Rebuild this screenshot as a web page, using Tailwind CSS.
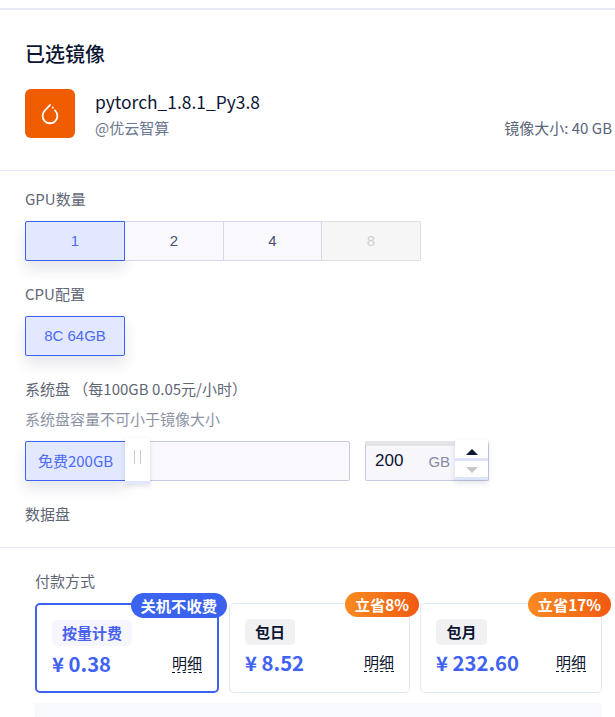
<!DOCTYPE html>
<html lang="zh-CN">
<head>
    <meta charset="UTF-8">
    <meta name="viewport" content="width=device-width, initial-scale=1.0">
    <title>已选镜像</title>
    <script src="https://cdn.jsdelivr.net/npm/@tailwindcss/browser@4"></script>
</head>
<body class="bg-white h-[717px] w-[615px] overflow-hidden font-['Noto_Sans_CJK_SC','Noto_Sans',sans-serif] text-[#0c1633]">

    <div class="h-[10px] border-b-2 border-[#e8ebf6]"></div>

    <!-- selected image -->
    <section class="h-[161px] border-b border-[#e4e9f9] pl-[25px] pr-[3px] pt-[30px]">
        <h2 class="text-[20px] leading-[28px] font-medium">已选镜像</h2>
        <div class="flex mt-[21px]">
            <div class="w-[50px] h-[49px] rounded-[6px] bg-[#f05c00] flex items-center justify-center">
                <svg class="mt-[2px]" width="20" height="21" viewBox="0 0 20 21" fill="none">
                    <path d="M10 1 L5 6.4 A7.4 7.4 0 1 0 15 6.4" stroke="#fff" stroke-width="1.8" stroke-linecap="round"/>
                    <circle cx="12.8" cy="3.4" r="1" fill="#fff"/>
                </svg>
            </div>
            <div class="flex-1 ml-[20px] pt-[1px] flex flex-col">
                <div class="text-[17.4px] leading-[24px]">pytorch_1.8.1_Py3.8</div>
                <div class="flex justify-between text-[15px] leading-[20px] mt-[4px] text-[#6b7690]">
                    <span>@优云智算</span>
                    <span class="text-[#5a6478]">镜像大小: 40 GB</span>
                </div>
            </div>
        </div>
    </section>

    <!-- config -->
    <section class="h-[377px] border-b border-[#e8ebf6] pl-[25px] pt-[18px] text-[15px] text-[#5f6675]">
        <div class="leading-[20px]">GPU数量</div>
        <div class="flex mt-[12px] w-[396px] h-[40px] font-['Liberation_Sans',sans-serif]">
            <div class="w-[100px] flex items-center justify-center rounded-l-[2px] border border-[#3b63f0] bg-[#e2e8fd] text-[#4d6bf5] shadow-[0_8px_14px_rgba(40,50,90,0.12)]">1</div>
            <div class="w-[99px] flex items-center justify-center border-y border-r border-[#d3d8ec] bg-[#f9f9fd] text-[#47506b]">2</div>
            <div class="w-[98px] flex items-center justify-center border-y border-r border-[#d3d8ec] bg-[#f9f9fd] text-[#47506b]">4</div>
            <div class="w-[99px] flex items-center justify-center border-y border-r border-[#dedfe3] bg-[#f6f6f7] text-[#cfd0d4] rounded-r-[2px]">8</div>
        </div>

        <div class="leading-[20px] mt-[23px]">CPU配置</div>
        <div class="mt-[12px] w-[100px] h-[40px] flex items-center justify-center rounded-[2px] border border-[#3b63f0] bg-[#e2e8fd] text-[#4d6bf5] font-['Liberation_Sans',sans-serif] shadow-[0_8px_14px_rgba(40,50,90,0.12)]">8C 64GB</div>

        <div class="leading-[20px] mt-[23px]">系统盘 （每100GB 0.05元/小时）</div>
        <div class="leading-[20px] mt-[10px] text-[#8b93a5]">系统盘容量不可小于镜像大小</div>

        <div class="flex mt-[12px]">
            <div class="relative w-[325px] h-[40px] rounded-[2px] border border-[#c5cadf] bg-[#f9f9fd]">
                <div class="-m-px w-[101px] h-[40px] flex items-center justify-center rounded-l-[2px] border border-[#3b63f0] bg-[#e2e8fd] text-[#4d6bf5] shadow-[0_8px_14px_rgba(40,50,90,0.12)]">免费200GB</div>
                <div class="absolute left-[99px] -top-[4px] w-[25px] h-[46px] flex justify-center gap-[5px] pt-[12px] pb-[17px] bg-white border-b-[3px] border-[#e2e8fb] shadow-[0_2px_5px_rgba(40,50,90,0.14)]">
                    <span class="w-px bg-[#c6cad6]"></span>
                    <span class="w-px bg-[#c6cad6]"></span>
                </div>
            </div>
            <div class="relative ml-[15px] w-[124px] h-[40px] rounded-[2px] border border-[#c5cadf] border-t-[5px] border-t-[#e4e4ea] bg-[#f6f6fb] flex items-center pb-[5px]">
                <span class="ml-[9px] text-[17px] text-[#0c1633] font-['Liberation_Sans',sans-serif]">200</span>
                <span class="ml-[25px] mt-[3px] text-[15px] text-[#858da6] font-['Liberation_Sans',sans-serif]">GB</span>
            </div>
            <div class="-ml-[34px] z-10 w-[33px] h-[40px] -mt-px flex flex-col shadow-[0_3px_6px_rgba(40,50,90,0.14)]">
                <div class="h-[21px] flex justify-center pt-[9px] bg-white border-b-[3px] border-[#dde3f8]">
                    <svg width="14" height="7" viewBox="0 0 14 7"><path d="M7 0 L13 6 H1 Z" fill="#0c1633"/></svg>
                </div>
                <div class="h-[20px] flex justify-center pt-[6px] bg-white border-b-[3px] border-[#dde3f8]">
                    <svg width="14" height="7" viewBox="0 0 14 7"><path d="M1 0 H13 L7 6 Z" fill="#c8c8cc"/></svg>
                </div>
            </div>
        </div>

        <div class="leading-[20px] mt-[23px]">数据盘</div>
    </section>

    <!-- payment -->
    <section class="pl-[35px] pt-[23px]">
        <div class="text-[15px] leading-[20px] text-[#5f6675]">付款方式</div>
        <div class="flex gap-[10px] mt-[12px] w-[567px]">
            <div class="relative w-[184px] h-[90px] rounded-[5px] border-2 border-[#3b63f0] pl-[15px] pt-[15px] pr-[15px]">
                <div class="absolute -right-[10px] -top-[12px] h-[25px] px-[10px] rounded-full bg-[#3b63f0] text-white text-[15.3px] leading-[25px] font-bold">关机不收费</div>
                <div class="w-[80px] h-[26px] rounded-[5px] bg-[#f6f7fe] text-[#4a60ee] text-[15px] leading-[26px] font-bold text-center">按量计费</div>
                <div class="flex justify-between items-end mt-[2px]">
                    <span class="text-[20.3px] leading-[30px] font-bold text-[#3f62f2]">¥ 0.38</span>
                    <span class="text-[15px] leading-[19px] border-b border-dashed border-[#0c1633] mb-[5px]">明细</span>
                </div>
            </div>
            <div class="relative w-[181px] h-[90px] rounded-[5px] border border-[#e2e8fb] pl-[15px] pt-[15px] pr-[15px]">
                <div class="absolute -right-[10px] -top-[12px] h-[25px] px-[10px] rounded-full bg-linear-to-r from-[#f98a20] to-[#f15a12] text-white text-[15.3px] leading-[25px] font-bold">立省8%</div>
                <div class="w-[50px] h-[26px] rounded-[5px] bg-[#f1f1f3] text-[15px] leading-[26px] font-bold text-center">包日</div>
                <div class="flex justify-between items-end mt-[2px]">
                    <span class="text-[20.3px] leading-[30px] font-bold text-[#3f62f2]">¥ 8.52</span>
                    <span class="text-[15px] leading-[19px] border-b border-dashed border-[#0c1633] mb-[5px]">明细</span>
                </div>
            </div>
            <div class="relative w-[182px] h-[90px] rounded-[5px] border border-[#e2e8fb] pl-[15px] pt-[15px] pr-[15px]">
                <div class="absolute -right-[10px] -top-[12px] h-[25px] px-[10px] rounded-full bg-linear-to-r from-[#f98a20] to-[#f15a12] text-white text-[15.3px] leading-[25px] font-bold">立省17%</div>
                <div class="w-[51px] h-[26px] rounded-[5px] bg-[#f1f1f3] text-[15px] leading-[26px] font-bold text-center">包月</div>
                <div class="flex justify-between items-end mt-[2px]">
                    <span class="text-[20.3px] leading-[30px] font-bold text-[#3f62f2]">¥ 232.60</span>
                    <span class="text-[15px] leading-[19px] border-b border-dashed border-[#0c1633] mb-[5px]">明细</span>
                </div>
            </div>
        </div>
        <div class="mt-[10px] w-[567px] h-[20px] rounded-[2px] bg-[#f8f9fc]"></div>
    </section>

</body>
</html>
